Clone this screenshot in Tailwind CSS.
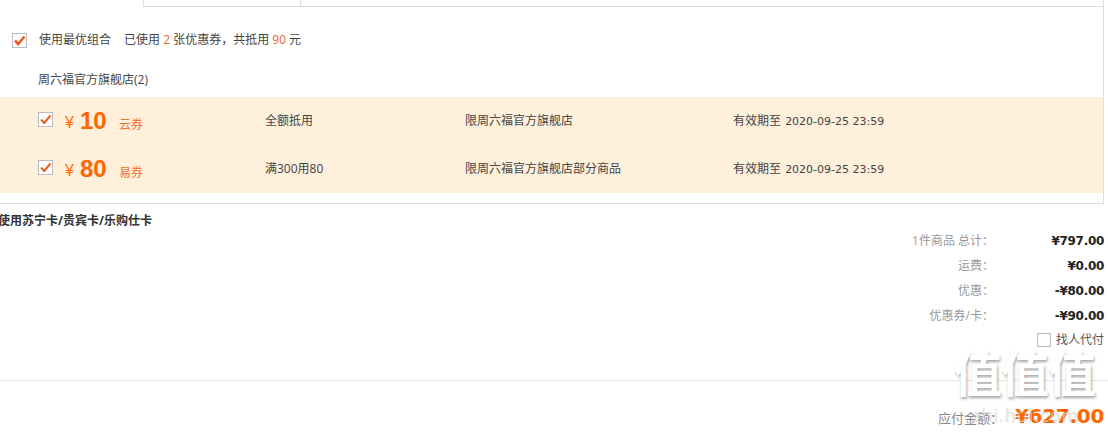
<!DOCTYPE html>
<html lang="zh">
<head>
  <meta charset="UTF-8" />
  <title>结算</title>
  <script src="https://cdn.jsdelivr.net/npm/@tailwindcss/browser@4"></script>
</head>
<body class="bg-white w-[1108px] h-[432px] overflow-hidden relative font-['Open_Sans','Noto_Sans_CJK_SC',sans-serif] text-[12px] text-[#444]">
  <!-- Coupon panel -->
  <div class="w-[1104px] h-[204px] border-r border-b border-[#ddd]">
    <!-- Tabs stub -->
    <div class="h-[7px] flex">
      <div class="w-[143px]"></div>
      <div class="w-[158px] border-l border-r border-b border-[#ddd]"></div>
      <div class="flex-1 border-b border-[#ddd]"></div>
    </div>
    <div class="h-[66px] flex items-center pl-[12px]">
      <span class="w-[15px] h-[15px] border border-[#bbb] bg-white flex items-center justify-center mr-[12px]">
        <svg class="w-[13px] h-[13px]" viewBox="0 0 13 13" fill="none" stroke="#f0591f" stroke-width="2.6"><path d="M2 6.5l3.2 3.5L11.5 2.5" /></svg>
      </span>
      <span>使用最优组合</span>
      <span class="ml-[13px]">已使用 <span class="text-[#f0652f]">2</span> 张优惠券，共抵用 <span class="text-[#f0652f]">90</span> 元</span>
    </div>
    <div class="h-[24px] -mt-[5px] mb-[5px] pl-[38px] flex items-center">周六福官方旗舰店(2)</div>
    <!-- Coupon rows -->
    <div class="bg-[#fff0dc]">
      <div class="h-[48px] flex items-center">
        <div class="w-[265px] flex items-center pl-[38px]">
          <span class="w-[15px] h-[15px] border border-[#bbb] bg-white flex items-center justify-center -mt-[3px] mr-[12px]">
            <svg class="w-[13px] h-[13px]" viewBox="0 0 13 13" fill="none" stroke="#f0591f" stroke-width="2"><path d="M2 6.5l3.2 3.5L11.5 2.5" /></svg>
          </span>
          <span class="text-[#ff6600] text-[16px] font-['Liberation_Sans'] mt-[4px] w-[15px]">¥</span>
          <span class="text-[#ff6600] text-[24px] font-['Liberation_Sans'] font-bold w-[39px]">10</span>
          <span class="text-[#f0703a] mt-[7px]">云券</span>
        </div>
        <div class="w-[200px]">全额抵用</div>
        <div class="w-[268px]">限周六福官方旗舰店</div>
        <div>有效期至 <span class="ml-[1px] font-['DejaVu_Sans'] text-[11px]">2020-09-25 23:59</span></div>
      </div>
      <div class="h-[48px] flex items-center">
        <div class="w-[265px] flex items-center pl-[38px]">
          <span class="w-[15px] h-[15px] border border-[#bbb] bg-white flex items-center justify-center -mt-[3px] mr-[12px]">
            <svg class="w-[13px] h-[13px]" viewBox="0 0 13 13" fill="none" stroke="#f0591f" stroke-width="2"><path d="M2 6.5l3.2 3.5L11.5 2.5" /></svg>
          </span>
          <span class="text-[#ff6600] text-[16px] font-['Liberation_Sans'] mt-[4px] w-[15px]">¥</span>
          <span class="text-[#ff6600] text-[24px] font-['Liberation_Sans'] font-bold w-[39px]">80</span>
          <span class="text-[#f0703a] mt-[7px]">易券</span>
        </div>
        <div class="w-[200px]">满300用80</div>
        <div class="w-[268px]">限周六福官方旗舰店部分商品</div>
        <div>有效期至 <span class="ml-[1px] font-['DejaVu_Sans'] text-[11px]">2020-09-25 23:59</span></div>
      </div>
    </div>
  </div>

  <div class="h-[24px] -ml-[2px] pt-[8px] font-bold text-[#333] leading-[18px]">使用苏宁卡/贵宾卡/乐购仕卡</div>

  <!-- Totals -->
  <div class="w-[1104px] flex flex-col items-end text-[#999]">
    <div class="h-[25px] flex items-center leading-[18px]"><span><span class="text-[#e0904f]">1</span>件商品 总计：</span><span class="w-[110px] text-right font-bold text-[12px] text-[#222] font-['DejaVu_Sans'] tracking-[-0.3px]">¥797.00</span></div>
    <div class="h-[25px] flex items-center leading-[18px]"><span>运费：</span><span class="w-[110px] text-right font-bold text-[12px] text-[#222] font-['DejaVu_Sans'] tracking-[-0.3px]">¥0.00</span></div>
    <div class="h-[25px] flex items-center leading-[18px]"><span>优惠：</span><span class="w-[110px] text-right font-bold text-[12px] text-[#222] font-['DejaVu_Sans'] tracking-[-0.3px]">-¥80.00</span></div>
    <div class="h-[25px] flex items-center leading-[18px]"><span>优惠券/卡：</span><span class="w-[110px] text-right font-bold text-[12px] text-[#222] font-['DejaVu_Sans'] tracking-[-0.3px]">-¥90.00</span></div>
    <div class="h-[24px] flex items-center leading-[18px] text-[#555]"><span class="w-[14px] h-[14px] border border-[#bbb] mr-[5px]"></span>找人代付</div>
  </div>

  <div class="w-[1108px] mt-[28px] border-t border-[#e5e5e5]"></div>
  <div class="w-[1104px] mt-[22px] flex items-center justify-end text-[#888]">
    <span class="text-[13px] mt-[6px] mr-[12px]">应付金额：</span><span class="text-[#ff6600] text-[20px] font-bold font-['DejaVu_Sans'] leading-[26px] -tracking-[0.3px]">¥627.00</span>
  </div>

  <!-- Watermark -->
  <div class="absolute left-[954px] top-[337px] text-[48px] leading-[68px] tracking-[-1px] font-bold text-white font-['Noto_Sans_CJK_SC'] [text-shadow:1px_2px_3px_rgba(0,0,0,0.35)]">值值值</div>
  <div class="absolute left-[972px] top-[402px] text-[18px] tracking-[1px] text-white/60 [text-shadow:0_0_1px_rgba(0,0,0,0.25)]">zhi.hui.com</div>
</body>
</html>
